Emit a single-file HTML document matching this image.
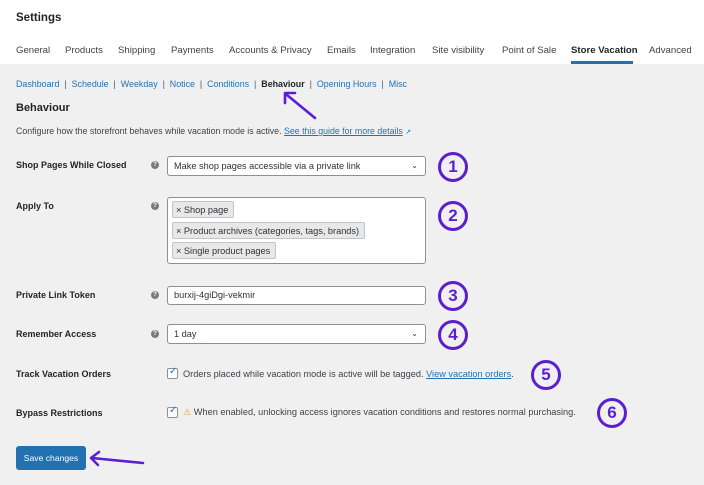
<!DOCTYPE html>
<html><head><meta charset="utf-8"><style>
*{box-sizing:border-box;margin:0;padding:0}
body{width:704px;height:485px;background:#f0f0f1;font-family:"Liberation Sans",sans-serif;color:#1d2327;position:relative;overflow:hidden}
.a{position:absolute;white-space:nowrap}
.hdr{position:absolute;left:0;top:0;width:704px;height:64px;background:#fff}
.tab{position:absolute;top:45px;font-size:9.6px;color:#3c434a}
.sub{font-size:8.9px;color:#2271b1}
.lbl{font-size:9px;font-weight:bold;color:#1d2327}
.help{position:absolute;width:8px;height:8px;border-radius:50%;background:#787c82;color:#fff;font-size:6px;font-weight:bold;text-align:center;line-height:8px}
.box{position:absolute;background:#fff;border:1px solid #8c8f94;border-radius:3px;font-size:9.2px;color:#2c3338;padding-left:6px}
.tag{position:absolute;left:4px;background:#e8e8e8;border:1px solid #c3c4c7;border-radius:2px;font-size:9.2px;color:#2c3338;padding:0 5px 0 3px;height:17px;line-height:16px}
.num{position:absolute;width:30px;height:30px;border:3px solid #5a1fd1;border-radius:50%;color:#5a1fd1;font-weight:bold;font-size:17px;text-align:center;line-height:24px;background:transparent}
.cb{position:absolute;width:11px;height:11px;border:1px solid #8c8f94;border-radius:2px;background:#fff}
</style></head><body>
<div class="hdr"></div>
<div class="a" style="left:16px;top:12px;font-size:11.5px;font-weight:bold">Settings</div>
<div class="tab" style="left:16px">General</div>
<div class="tab" style="left:65px">Products</div>
<div class="tab" style="left:118px">Shipping</div>
<div class="tab" style="left:171px">Payments</div>
<div class="tab" style="left:229px">Accounts &amp; Privacy</div>
<div class="tab" style="left:327px">Emails</div>
<div class="tab" style="left:370px">Integration</div>
<div class="tab" style="left:432px">Site visibility</div>
<div class="tab" style="left:502px">Point of Sale</div>
<div class="tab" style="left:571px;color:#1d2327;font-weight:bold">Store Vacation</div>
<div class="tab" style="left:649px">Advanced</div>
<div class="a" style="left:571px;top:61px;width:62px;height:3px;background:#2271b1"></div>

<div class="a sub" style="left:16px;top:79px">Dashboard &nbsp;<span style="color:#50575e">|</span>&nbsp; Schedule &nbsp;<span style="color:#50575e">|</span>&nbsp; Weekday &nbsp;<span style="color:#50575e">|</span>&nbsp; Notice &nbsp;<span style="color:#50575e">|</span>&nbsp; Conditions &nbsp;<span style="color:#50575e">|</span>&nbsp; <b style="color:#1d2327">Behaviour</b> &nbsp;<span style="color:#50575e">|</span>&nbsp; Opening Hours &nbsp;<span style="color:#50575e">|</span>&nbsp; Misc</div>
<div class="a" style="left:16px;top:102px;font-size:11px;font-weight:bold">Behaviour</div>
<div class="a" style="left:16px;top:126px;font-size:8.8px;color:#3c434a">Configure how the storefront behaves while vacation mode is active. <span style="color:#2271b1;text-decoration:underline">See this guide for more details</span> <span style="color:#2271b1;font-size:7px">&#x2197;</span></div>

<div class="a lbl" style="left:16px;top:160px">Shop Pages While Closed</div>
<div class="help" style="left:151px;top:161px">?</div>
<div class="box" style="left:167px;top:156px;width:259px;height:20px;line-height:18px">Make shop pages accessible via a private link<span style="position:absolute;right:7px;top:0;font-size:8px">&#x2304;</span></div>
<div class="num" style="left:438px;top:152px">1</div>

<div class="a lbl" style="left:16px;top:201px">Apply To</div>
<div class="help" style="left:151px;top:202px">?</div>
<div class="box" style="left:167px;top:197px;width:259px;height:67px;padding:0">
<div class="tag" style="top:3px">× Shop page</div>
<div class="tag" style="top:24px">× Product archives (categories, tags, brands)</div>
<div class="tag" style="top:44px">× Single product pages</div>
</div>
<div class="num" style="left:438px;top:201px">2</div>

<div class="a lbl" style="left:16px;top:290px">Private Link Token</div>
<div class="help" style="left:151px;top:291px">?</div>
<div class="box" style="left:167px;top:286px;width:259px;height:19px;line-height:17px">burxij-4giDgi-vekmir</div>
<div class="num" style="left:438px;top:281px">3</div>

<div class="a lbl" style="left:16px;top:329px">Remember Access</div>
<div class="help" style="left:151px;top:330px">?</div>
<div class="box" style="left:167px;top:324px;width:259px;height:20px;line-height:18px">1 day<span style="position:absolute;right:7px;top:0;font-size:8px">&#x2304;</span></div>
<div class="num" style="left:438px;top:320px">4</div>

<div class="a lbl" style="left:16px;top:369px">Track Vacation Orders</div>
<div class="cb" style="left:167px;top:368px"><span style="position:absolute;left:1px;top:-3px;color:#2271b1;font-size:10px">✓</span></div>
<div class="a" style="left:183px;top:369px;font-size:9.2px;color:#3c434a">Orders placed while vacation mode is active will be tagged. <span style="color:#2271b1;text-decoration:underline">View vacation orders</span>.</div>
<div class="num" style="left:531px;top:360px">5</div>

<div class="a lbl" style="left:16px;top:408px">Bypass Restrictions</div>
<div class="cb" style="left:167px;top:407px"><span style="position:absolute;left:1px;top:-3px;color:#2271b1;font-size:10px">✓</span></div>
<div class="a" style="left:183px;top:407px;font-size:9.2px;color:#3c434a"><span style="color:#dba617">&#9888;</span> When enabled, unlocking access ignores vacation conditions and restores normal purchasing.</div>
<div class="num" style="left:597px;top:398px">6</div>

<div class="a" style="left:16px;top:446px;width:70px;height:24px;background:#2271b1;border-radius:3px;color:#fff;font-size:8.6px;text-align:center;line-height:24px">Save changes</div>

<svg class="a" style="left:0;top:0" width="704" height="485">
<g stroke="#5a1fd1" stroke-width="2.6" fill="none" stroke-linecap="round" stroke-linejoin="round">
<line x1="315" y1="118" x2="287" y2="95"/>
<polyline points="285,103 285,93 295,93"/>
<line x1="143" y1="463" x2="92" y2="458"/>
<polyline points="99,452 91,458 98,465"/>
</g>
</svg>
</body></html>
